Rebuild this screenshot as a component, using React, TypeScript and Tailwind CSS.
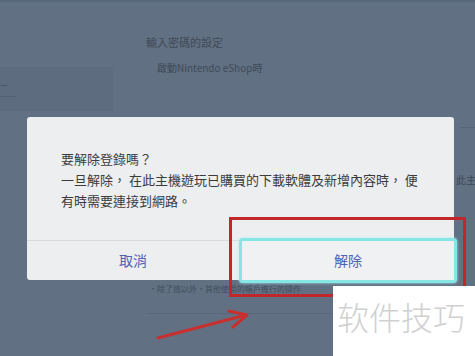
import React from "react";

const font = { fontFamily: '"Noto Sans CJK TC", "Noto Sans", sans-serif' };

export default function App() {
  return (
    <div className="relative h-[356px] w-[475px] overflow-hidden bg-[#617083]" style={font}>
      {/* background settings page */}
      <div className="h-[2px] w-full bg-[#58687b]" />
      <div className="flex">
        <div className="w-[146px] shrink-0">
          <div className="mt-[65px] flex h-[44px] w-[113px] flex-col justify-center gap-[2px] bg-[#5d6c7f]">
            <span className="text-[8px] leading-[8px] text-[#3e4856]">ᅳ</span>
            <span className="text-[7px] leading-[7px] tracking-[1px] text-[#3e4856]">......</span>
          </div>
        </div>
        <div className="flex-1">
          <div className="mt-[33px] text-[11px] leading-[14px] text-[#404a57]">輸入密碼的設定</div>
          <div className="mt-[12px] pl-[11px] text-[10px] leading-[13px] text-[#404a57]">啟動Nintendo eShop時</div>
        </div>
      </div>

      <div className="absolute right-0 top-[127px] h-px w-[15px] bg-[#56657a]" />
      <div className="absolute left-[456px] top-[172px] whitespace-nowrap text-[10px] text-[#3e4856]">此主</div>
      <div className="absolute left-[149px] top-[284px] whitespace-nowrap text-[8px] leading-[10px] text-[#434d5b]">・除了這以外，其他使用的帳戶進行的操作</div>
      <div className="absolute left-[147px] top-[313px] h-px w-[185px] bg-[#58677a]" />

      {/* dialog */}
      <div className="absolute left-[27px] top-[117px] flex h-[163px] w-[427px] flex-col rounded-[3px] bg-[#edeeef]">
        <div className="flex-1 pl-[34px] pt-[31px] text-[13px] leading-[21px] text-[#3a3b3d]">
          <div>要解除登錄嗎？</div>
          <div className="whitespace-nowrap">一旦解除， 在此主機遊玩已購買的下載軟體及新增內容時， 便</div>
          <div>有時需要連接到網路。</div>
        </div>
        <div className="flex h-[40px] border-t border-[#d8dadc]">
          <div className="flex w-[212px] items-center justify-center text-[14px] text-[#4d62b0]">取消</div>
          <div className="flex-1" />
        </div>
      </div>

      {/* focused button */}
      <div className="absolute left-[239px] top-[238px] flex h-[45px] w-[218px] items-center justify-center rounded-[4px] border-[3px] border-[#86e6e4] bg-[#eff1f2] text-[14px] text-[#4d62b0] shadow-[0_0_3px_#a8f0ee]">
        解除
      </div>

      {/* annotation */}
      <div className="absolute left-[229px] top-[217px] h-[80px] w-[237px] border-[3px] border-[#c0262a]" />
      <svg className="absolute left-0 top-0" width="475" height="356">
        <line x1="158" y1="338" x2="246" y2="315" stroke="#c8302f" strokeWidth="3" strokeLinecap="round" />
        <polyline points="229,311 247,315 233,327" fill="none" stroke="#c8302f" strokeWidth="3" strokeLinecap="round" strokeLinejoin="round" />
      </svg>

      {/* watermark */}
      <div className="absolute left-[333px] top-[286px] flex h-[70px] w-[142px] items-start bg-white pl-[4px] pt-[10px]">
        <span className="text-[32px] font-light leading-[40px] text-[#d0d0d0]">软件技巧</span>
      </div>
    </div>
  );
}
